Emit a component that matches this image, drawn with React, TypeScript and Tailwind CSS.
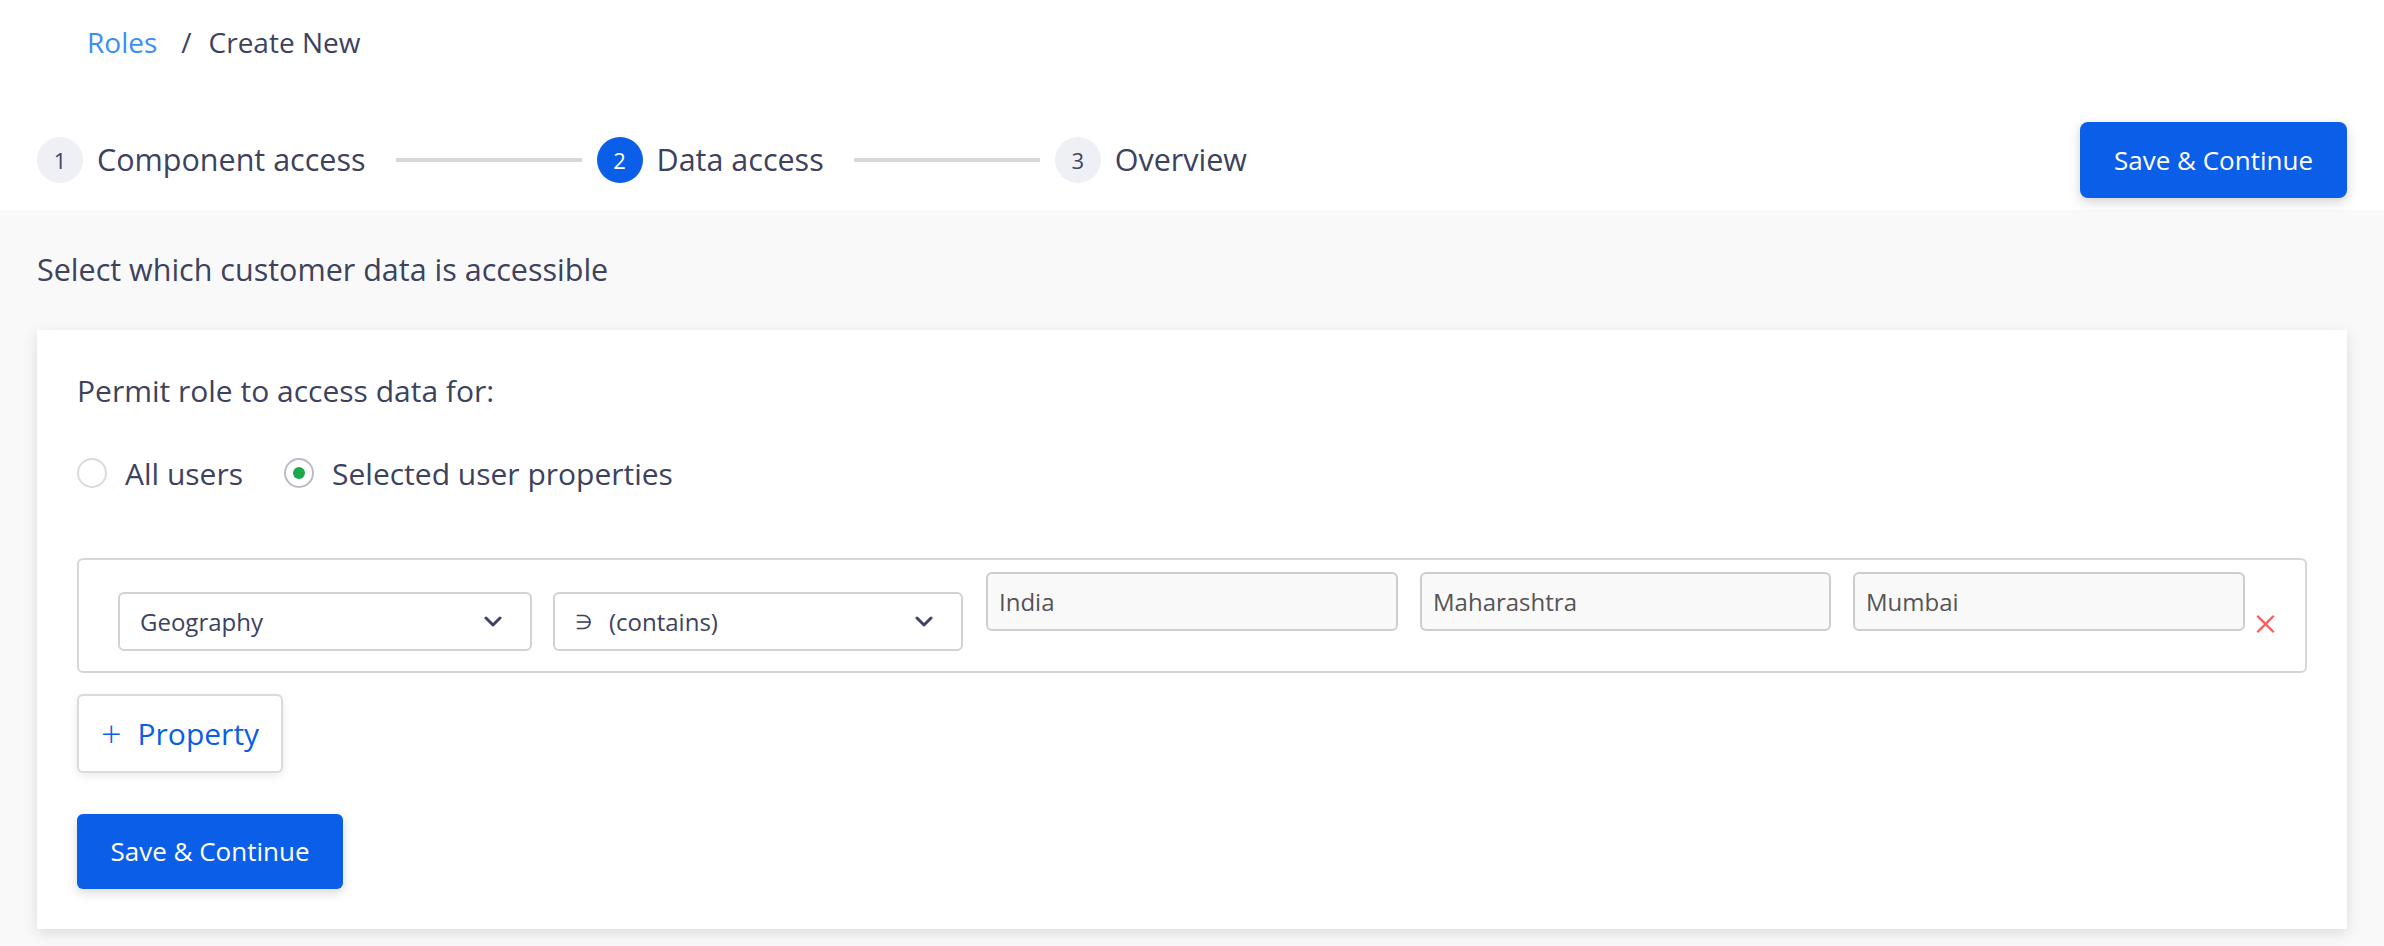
import React from "react";

const font = { fontFamily: "'Open Sans', Lato, sans-serif" };

function Chevron() {
  return (
    <svg width="18" height="11" viewBox="0 0 18 11" fill="none">
      <path d="M2 2l7 7 7-7" stroke="#3f4462" strokeWidth="3" strokeLinecap="round" strokeLinejoin="round" />
    </svg>
  );
}

function Step({ n, label, active }: { n: number; label: string; active?: boolean }) {
  return (
    <div className="flex items-center gap-[14px]">
      <div
        className={`flex h-[46px] w-[46px] items-center justify-center rounded-full text-[22px] ${
          active ? "bg-[#0b5ee8] text-white" : "bg-[#eff0f5] text-[#40455f]"
        }`}
      >
        {n}
      </div>
      <span className="text-[30.5px] text-[#3d425e]">{label}</span>
    </div>
  );
}

function Connector() {
  return <div className="ml-[30px] mr-[15px] h-[4px] w-[186px] bg-[#d8d8d8]" />;
}

function Radio({ label, checked }: { label: string; checked?: boolean }) {
  return (
    <label className="flex items-center gap-[18px]">
      <span
        className={`flex h-[30px] w-[30px] items-center justify-center rounded-full border-2 bg-white ${
          checked ? "border-[#b9bcc4]" : "border-[#dadada]"
        }`}
      >
        {checked && <span className="h-[12px] w-[12px] rounded-full bg-[#1aa84b]" />}
      </span>
      <span className="text-[30px] text-[#3d425e]">{label}</span>
    </label>
  );
}

function SelectBox({ children, width }: { children: React.ReactNode; width: string }) {
  return (
    <div
      className={`mt-[20px] flex h-[59px] ${width} items-center justify-between rounded-[6px] border-2 border-[#d2d2d6] bg-white pl-[20px] pr-[28px] text-[24px] text-[#3d425e]`}
    >
      <div className="flex items-center">{children}</div>
      <Chevron />
    </div>
  );
}

function ValueInput({ value, width }: { value: string; width: string }) {
  return (
    <div
      className={`flex h-[59px] ${width} items-center rounded-[6px] border-2 border-[#cdcdcd] bg-[#f9f9f9] pl-[11px] text-[24px] text-[#555555]`}
    >
      {value}
    </div>
  );
}

export default function App() {
  return (
    <div className="min-h-screen w-full bg-[#f9f9f9]" style={font}>
      <div className="h-[210px] bg-white">
        <div className="flex h-[84px] items-center pl-[87px] text-[28px]">
          <span className="text-[#3a8ef6]">Roles</span>
          <span className="ml-[24px] mr-[17px] text-[#3d425e]">/</span>
          <span className="text-[#3d425e]">Create New</span>
        </div>
        <div className="mt-[38px] flex h-[76px] items-center justify-between pl-[37px] pr-[37px]">
          <div className="flex items-center">
            <Step n={1} label="Component access" />
            <Connector />
            <Step n={2} label="Data access" active />
            <Connector />
            <Step n={3} label="Overview" />
          </div>
          <button className="h-[76px] w-[267px] rounded-[8px] bg-[#0b5ee8] text-[26px] text-white shadow-[0_4px_12px_rgba(0,0,0,0.18)]">
            Save &amp; Continue
          </button>
        </div>
      </div>

      <div className="flex h-[120px] items-center pl-[37px] text-[30.5px] text-[#3d425e]">
        Select which customer data is accessible
      </div>

      <div className="mx-[37px] bg-white px-[40px] pb-[40px] pt-[40px] shadow-[0_4px_14px_rgba(0,0,0,0.12)]">
        <div className="flex h-[40px] items-center text-[30px] text-[#3d425e]">
          Permit role to access data for:
        </div>
        <div className="mt-[43px] flex h-[40px] items-center gap-[41px]">
          <Radio label="All users" />
          <Radio label="Selected user properties" checked />
        </div>

        <div className="mt-[65px] flex items-start rounded-[6px] border-2 border-[#d6d6da] pb-[20px] pl-[39px] pt-[12px]">
          <SelectBox width="w-[414px]">Geography</SelectBox>
          <div className="ml-[21px]" />
          <SelectBox width="w-[410px]">
            <span className="w-[34px] text-[20px]">∋</span>
            <span>(contains)</span>
          </SelectBox>
          <div className="ml-[23px] flex gap-[22px]">
            <ValueInput value="India" width="w-[412px]" />
            <ValueInput value="Maharashtra" width="w-[411px]" />
            <ValueInput value="Mumbai" width="w-[392px]" />
          </div>
          <button className="ml-[11px] mt-[43px]">
            <svg width="19" height="18" viewBox="0 0 19 18" fill="none">
              <path d="M2 1.5l15 15M17 1.5l-15 15" stroke="#ff5a5a" strokeWidth="2.4" strokeLinecap="round" />
            </svg>
          </button>
        </div>

        <button className="mt-[21px] flex h-[79px] w-[206px] items-center rounded-[6px] border-2 border-[#dadade] bg-white pl-[22px] text-[30px] text-[#0b5ee8] shadow-[0_3px_8px_rgba(0,0,0,0.08)]">
          <span className="mr-[16px] text-[36px] font-light leading-none">+</span>
          Property
        </button>

        <button className="mt-[41px] h-[75px] w-[266px] rounded-[6px] bg-[#0b5ee8] text-[26px] text-white shadow-[0_4px_12px_rgba(0,0,0,0.15)]">
          Save &amp; Continue
        </button>
      </div>
    </div>
  );
}
